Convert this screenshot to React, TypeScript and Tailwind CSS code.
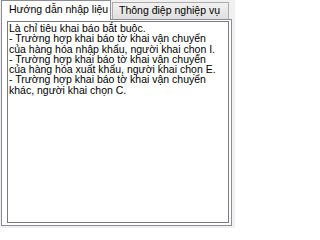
import React from "react";

const LINES = [
  "Là chỉ tiêu khai báo bắt buộc.",
  "- Trường hợp khai báo tờ khai vận chuyển",
  "của hàng hóa nhập khẩu, người khai chọn I.",
  "- Trường hợp khai báo tờ khai vận chuyển",
  "của hàng hóa xuất khẩu, người khai chọn E.",
  "- Trường hợp khai báo tờ khai vận chuyển",
  "khác, người khai chọn C.",
];

export default function App() {
  return (
    <div
      className="w-[235px] h-[228px] bg-[#f0f0f0] text-black overflow-hidden"
      style={{ fontFamily: '"Liberation Sans", Arial, sans-serif' }}
    >
      <div className="flex flex-col w-[232px] h-[226px] pl-px">
        {/* Tabs */}
        <div className="flex items-end h-[19px] relative z-10">
          <div className="w-[110px] h-[20px] -mb-px pl-[7px] pt-[2px] bg-white border border-b-0 border-[#898c95] text-[10.5px] leading-[13px] whitespace-nowrap">
            Hướng dẫn nhập liệu
          </div>
          <div className="w-[117px] h-[17px] ml-px pl-[6px] pt-px bg-gradient-to-b from-[#f2f2f2] to-[#dedede] border border-b-0 border-[#acacac] text-[10.5px] leading-[13px] whitespace-nowrap">
            Thông điệp nghiệp vụ
          </div>
        </div>
        {/* Page */}
        <div className="flex-1 bg-white border border-[#898c95] pt-[1px] pl-[5px] pr-[2px] pb-[2px] flex">
          <div className="flex-1 border border-[#7a7a7a] pl-[1px] pt-[1px] text-[10.5px] leading-[10.3px]">
            {LINES.map((l, i) => (
              <div key={i} className="whitespace-nowrap">
                {l}
              </div>
            ))}
          </div>
        </div>
      </div>
    </div>
  );
}
